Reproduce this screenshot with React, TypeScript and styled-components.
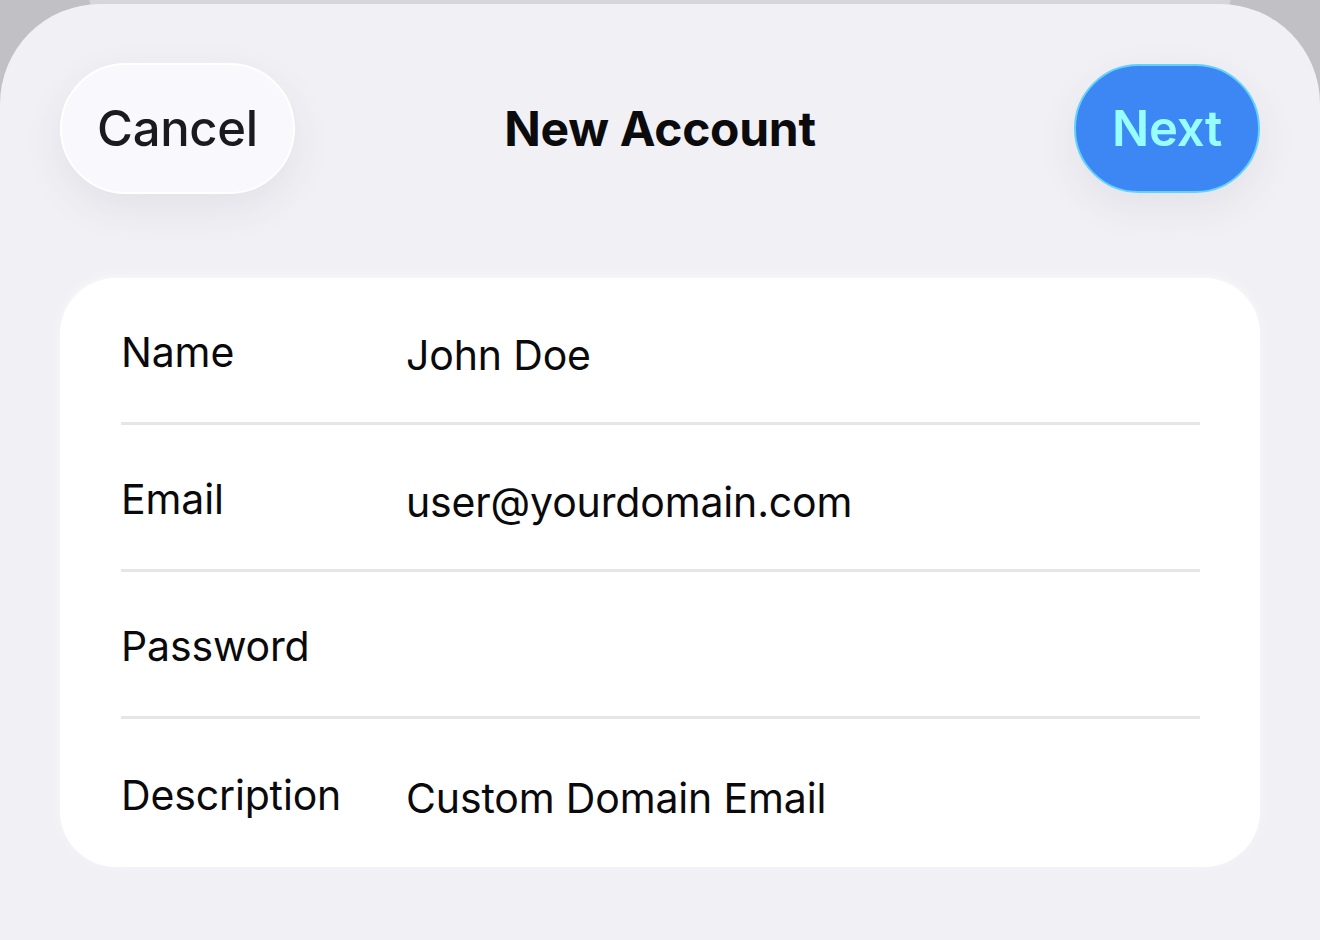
import React from 'react'
import styled, { createGlobalStyle } from 'styled-components'

const GlobalStyle = createGlobalStyle`
	html, body {
		margin: 0;
		padding: 0;
		background: #c1c0c5;
		font-family: Inter, "Noto Sans", "Liberation Sans", sans-serif;
		-webkit-font-smoothing: antialiased;
	}
	#root {
		width: 1320px;
		height: 940px;
		overflow: hidden;
	}
`

const Stage = styled.div`
	position: relative;
	width: 1320px;
	height: 940px;
	overflow: hidden;
	background: #c1c0c5;

	&::before {
		content: '';
		position: absolute;
		top: -30px;
		left: 88px;
		width: 1144px;
		height: 60px;
		border-radius: 0 0 40px 40px;
		background: #d6d5da;
	}
`

const Sheet = styled.div`
	position: relative;
	margin-top: 4px;
	height: 936px;
	background: #f0f0f5;
	border-radius: 100px 100px 0 0;
	padding: 59px 60px 0;
	box-sizing: border-box;
`

const Header = styled.header`
	display: grid;
	grid-template-columns: 1fr auto 1fr;
	align-items: center;
	height: 131px;
`

const PillButton = styled.button<{ primary?: boolean }>`
	justify-self: ${({ primary }) => (primary ? 'end' : 'start')};
	height: ${({ primary }) => (primary ? '129px' : '131px')};
	padding: 0 ${({ primary }) => (primary ? '36px' : '35px')};
	border-radius: 66px;
	font-family: Inter, "Noto Sans", sans-serif;
	font-size: 49px;
	font-weight: ${({ primary }) => (primary ? 600 : 500)};
	letter-spacing: -0.3px;
	color: ${({ primary }) => (primary ? '#98fdff' : '#1b1b1f')};
	background: ${({ primary }) => (primary ? '#3c87f4' : '#f9f9fd')};
	border: 2px solid ${({ primary }) => (primary ? '#62d2fb' : '#ffffff')};
	box-shadow: 0 14px 40px rgba(60, 60, 80, 0.08);
	cursor: pointer;
`

const Title = styled.h1`
	margin: 0;
	font-size: 48px;
	font-weight: 700;
	letter-spacing: -0.3px;
	color: #0b0b0d;
`

const Card = styled.section`
	margin-top: 84px;
	background: #ffffff;
	border-radius: 56px;
	padding: 0 60px 0 61px;
	box-shadow: 0 -2px 14px rgba(255, 255, 255, 0.6);
`

const Row = styled.div<{ last?: boolean }>`
	display: grid;
	grid-template-columns: 285px 1fr;
	align-items: center;
	height: ${({ last }) => (last ? '148px' : '144px')};
	border-bottom: ${({ last }) => (last ? 'none' : '3px solid #e6e6e9')};
`

const Label = styled.span`
	font-size: 41px;
	font-weight: 400;
	color: #0a0a0c;
	letter-spacing: -0.15px;
	margin-top: 4px;
`

const Value = styled.span`
	font-size: 41px;
	font-weight: 400;
	color: #0a0a0c;
	letter-spacing: -0.15px;
	margin-top: 10px;
`

const fields = [
	{ label: 'Name', value: 'John Doe' },
	{ label: 'Email', value: 'user@yourdomain.com' },
	{ label: 'Password', value: '' },
	{ label: 'Description', value: 'Custom Domain Email' },
]

export default function App() {
	return (
		<>
			<GlobalStyle />
			<Stage>
				<Sheet>
					<Header>
						<PillButton>Cancel</PillButton>
						<Title>New Account</Title>
						<PillButton primary>Next</PillButton>
					</Header>
					<Card>
						{fields.map((f, i) => (
							<Row key={f.label} last={i === fields.length - 1}>
								<Label>{f.label}</Label>
								<Value>{f.value}</Value>
							</Row>
						))}
					</Card>
				</Sheet>
			</Stage>
		</>
	)
}
